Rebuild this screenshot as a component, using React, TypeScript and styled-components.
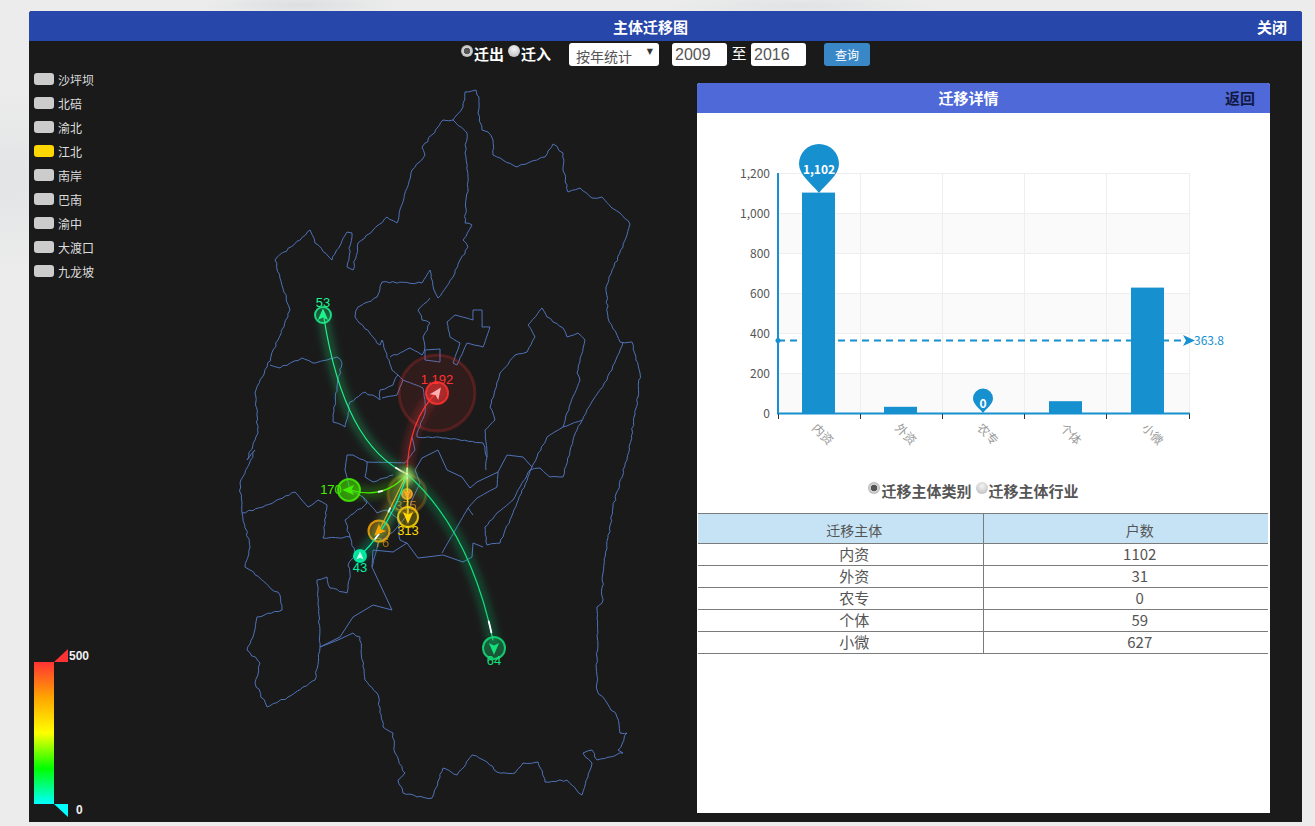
import React from "react";
import styled, { createGlobalStyle } from "styled-components";

const FONT = `"Noto Sans CJK SC", "Liberation Sans", sans-serif`;

const Global = createGlobalStyle`
  html, body { margin: 0; padding: 0; height: 826px; overflow: hidden; }
  body {
    font-family: ${FONT};
    background:
      radial-gradient(ellipse 100px 12px at 300px 5px, #dcdfe0 0, transparent 100%),
      radial-gradient(ellipse 140px 12px at 800px 6px, #e0e3e4 0, transparent 100%),
      radial-gradient(circle at 8px 180px, #e2e4e5 0, transparent 90px),
      #ececec;
  }
`;

const Page = styled.div`
  box-sizing: border-box;
  width: 1315px;
  height: 826px;
  padding: 11px 13px 4px 29px;
`;
const Window = styled.div`
  height: 811px;
  display: flex;
  flex-direction: column;
  background: #1a1a1a;
  border-radius: 3px 3px 0 0;
  overflow: hidden;
`;
const TitleBar = styled.header`
  flex: none;
  height: 30px;
  display: flex;
  align-items: center;
  background: #2747ab;
  color: #fff;
  font-size: 15px;
  font-weight: 700;
`;
const Title = styled.div`
  flex: 1;
  text-align: center;
`;
const CloseLink = styled.div`
  width: 30px;
  margin: 0 15px 0 -15px;
`;
const Toolbar = styled.div`
  flex: none;
  height: 29px;
  display: flex;
  justify-content: center;
  align-items: flex-start;
  padding-top: 2px;
  box-sizing: border-box;
  color: #fff;
  font-size: 15px;
`;
const RadioLabel = styled.label<{ $dark?: boolean }>`
  display: flex;
  align-items: center;
  height: 20px;
  font-weight: 700;
  font-size: 15px;
  color: ${(p) => (p.$dark ? "#555" : "#fff")};
  & + & {
    margin-left: 4px;
  }
`;
const Radio = styled.input.attrs({ type: "radio" })`
  appearance: none;
  width: 12px;
  height: 12px;
  margin: 0 1px 4px 0;
  border-radius: 50%;
  background: radial-gradient(circle at 50% 35%, #f4f4f4, #b5b5b5);
  &:checked {
    background: radial-gradient(circle, #555 0 3px, #d8d8d8 3.6px, #b5b5b5 6px);
  }
`;
const SelectWrap = styled.div`
  position: relative;
  margin-left: 18px;
`;
const Select = styled.select`
  appearance: none;
  display: block;
  box-sizing: border-box;
  width: 90px;
  height: 23px;
  padding: 3px 0 0 7px;
  border: 0;
  border-radius: 3px;
  background: #fff;
  color: #555;
  font-family: ${FONT};
  font-size: 14px;
`;
const Caret = styled.span`
  position: absolute;
  right: 6px;
  top: 4px;
  font-size: 8px;
  color: #333;
  font-family: "DejaVu Sans", sans-serif;
`;
const YearInput = styled.input<{ $ml?: number }>`
  box-sizing: border-box;
  width: 55px;
  height: 23px;
  padding: 0 3px;
  border: 0;
  border-radius: 3px;
  background: #fff;
  color: #555;
  font-family: "Liberation Sans", sans-serif;
  font-size: 16px;
  margin-left: ${(p) => p.$ml ?? 0}px;
`;
const To = styled.span`
  width: 24px;
  text-align: center;
  font-size: 15px;
  line-height: 20px;
`;
const QueryButton = styled.button`
  width: 46px;
  height: 23px;
  margin-left: 18px;
  padding: 0;
  border: 0;
  border-radius: 3px;
  background: #3a87c8;
  color: #fff;
  font-family: ${FONT};
  font-size: 12px;
`;
const Main = styled.div`
  flex: 1;
  display: flex;
  min-height: 0;
`;
const SideColumn = styled.aside`
  flex: none;
  width: 200px;
  box-sizing: border-box;
  padding: 0 0 3px 5px;
  display: flex;
  flex-direction: column;
  justify-content: space-between;
`;
const Legend = styled.ul`
  list-style: none;
  margin: 0;
  padding: 0;
  display: flex;
  flex-direction: column;
  gap: 6px;
`;
const LegendItem = styled.li`
  display: flex;
  align-items: center;
  height: 18px;
  gap: 4px;
  font-size: 12px;
  color: #ddd;
`;
const Swatch = styled.span<{ $on?: boolean }>`
  width: 20px;
  height: 12px;
  border-radius: 3px;
  background: ${(p) => (p.$on ? "#ffd700" : "#cccccc")};
`;
const MapSvg = styled.svg`
  flex: none;
  display: block;
`;
const Detail = styled.section`
  flex: none;
  width: 573px;
  height: 730px;
  margin-top: 13px;
  display: flex;
  flex-direction: column;
  background: #fff;
  border-radius: 3px 3px 0 0;
`;
const DetailHead = styled.div`
  flex: none;
  height: 30px;
  padding-bottom: 1px;
  box-sizing: border-box;
  display: flex;
  align-items: center;
  background: #5069d8;
  border-radius: 3px 3px 0 0;
  font-size: 15px;
  font-weight: 700;
`;
const DetailTitle = styled.div`
  flex: 1;
  text-align: center;
  color: #fff;
`;
const BackLink = styled.div`
  width: 30px;
  margin: 0 15px 0 -15px;
  color: #111a44;
`;
const ChartSvg = styled.svg`
  display: block;
  flex: none;
`;
const RadioRow = styled.div`
  flex: none;
  height: 33px;
  box-sizing: border-box;
  padding-right: 20px;
  display: flex;
  justify-content: center;
`;
const Table = styled.table`
  width: 570px;
  margin-left: 1px;
  border-collapse: collapse;
  table-layout: fixed;
  color: #555;
  text-align: center;
  font-size: 15px;
`;
const Th = styled.th<{ $last?: boolean }>`
  box-sizing: border-box;
  height: 30px;
  padding: 3px 0 0 28px;
  border: 1px solid #7b7b7b;
  border-left: 0;
  border-right-width: ${(p) => (p.$last ? 0 : 1)}px;
  background: #c5e3f5;
  font-size: 14px;
  font-weight: 400;
`;
const Td = styled.td<{ $last?: boolean }>`
  box-sizing: border-box;
  height: 22px;
  padding: 1px 0 0 28px;
  line-height: 18px;
  vertical-align: top;
  border: 1px solid #7b7b7b;
  border-left: 0;
  border-right-width: ${(p) => (p.$last ? 0 : 1)}px;
`;
const MapLabel = styled.text`
  font-family: "Liberation Sans", sans-serif;
  font-size: 13px;
  text-anchor: middle;
`;
const AxisLabel = styled.text`
  font-family: ${FONT};
  font-size: 12px;
  fill: #555;
  text-anchor: end;
`;
const CatLabel = styled.text`
  font-family: ${FONT};
  font-size: 12px;
  fill: #999;
`;
const PinText = styled.text`
  font-family: ${FONT};
  font-size: 12px;
  font-weight: 700;
  fill: #fff;
  text-anchor: middle;
`;
const MarkText = styled.text`
  font-family: ${FONT};
  font-size: 12px;
  fill: #1790cf;
`;
const ScaleText = styled.text`
  font-family: "Liberation Sans", sans-serif;
  font-size: 12px;
  font-weight: 700;
  fill: #eee;
`;

/* Turns an outline into a jagged border, the same on every run. */
function rough(pts: number[], amp: number): string {
  let seed = 7;
  const rnd = () => {
    seed = (seed * 16807) % 2147483647;
    return (seed % 1000) / 500 - 1;
  };
  let d = `M${pts[0]} ${pts[1]}`;
  for (let i = 2; i < pts.length; i += 2) {
    const x0 = pts[i - 2], y0 = pts[i - 1], x1 = pts[i], y1 = pts[i + 1];
    const len = Math.hypot(x1 - x0, y1 - y0);
    const n = amp > 0 ? Math.max(1, Math.floor(len / 3.5)) : 1;
    for (let k = 1; k < n; k++) {
      const t = k / n;
      d += `L${(x0 + (x1 - x0) * t + rnd() * amp).toFixed(1)} ${(y0 + (y1 - y0) * t + rnd() * amp).toFixed(1)}`;
    }
    d += `L${x1} ${y1}`;
  }
  return d;
}

const OUTLINE = [465,92,476,90,477,95,479,97,478,113,482,130,488,132,493,140,493,155,503,160,517,167,530,162,545,157,553,144,563,153,563,167,568,192,580,188,592,198,602,197,612,208,620,213,630,224,623,247,612,270,606,287,608,318,620,342,632,342,640,373,638,397,627,460,613,507,603,573,602,603,597,607,597,690,607,703,617,717,620,733,627,733,618,750,623,753,597,760,592,750,583,753,592,763,588,777,582,795,567,780,545,782,538,762,523,763,515,773,497,772,487,762,472,755,457,775,443,768,432,798,417,797,403,793,398,780,405,773,395,753,393,733,383,727,377,693,365,680,360,637,353,633];
const OUTLINE_LEFT = [320,647,315,680,288,697,267,707,255,683,260,663,247,650,253,637,257,617,282,610,280,595,250,570,245,567,250,547,242,513,240,483,255,450,247,460,258,433,255,393,267,367,278,340,290,310,275,260,310,230,315,243,332,260,347,232,352,233,347,267,353,270,358,243,373,230,387,217,397,223,412,170,425,155,422,147,443,120,453,120,463,107,465,92];

const BORDERS: { p: number[]; a: number }[] = [
  { p: OUTLINE, a: 1 },
  { p: OUTLINE_LEFT, a: 1 },
  { p: [353,633,338,640,320,647], a: 0 },
  { p: [453,120,467,133,465,153,468,177,465,223,472,225,463,240,468,247,460,260,453,277,438,298,434,290,430,270,422,283,382,282,377,297,358,307,355,317,380,345,382,340,392,370,398,375,393,385,380,390,380,400,365,392,350,402,345,427,333,422,337,387,342,363,337,357,313,363,302,358,280,368,270,365], a: 1 },
  { p: [430,298,418,310,422,320,430,323,423,337,425,347,422,355,410,348,390,357], a: 1 },
  { p: [425,350,440,349,440,362,425,360,425,350], a: 0 },
  { p: [447,322,455,315,473,320,473,310,482,310,482,327,490,327,483,347,467,343,457,365,453,363,460,343,450,337,447,322], a: 0.25 },
  { p: [398,375,403,380,423,388], a: 0.3 },
  { p: [403,380,397,395,382,398], a: 0.4 },
  { p: [423,388,425,400,425,413,417,433,417,437], a: 0.6 },
  { p: [417,437,443,438,483,443,487,457,486,470], a: 1 },
  { p: [485,430,495,420,490,407,500,373,515,355,527,352,535,337,528,325,542,308,547,317,563,328,567,337,578,333,585,340,577,373,580,380,567,413,563,427,547,437,537,457,532,467,517,503,500,543,487,545,485,527,497,513,513,500,530,470,540,468,550,477,563,477,573,440,577,430,593,400,607,380,623,342], a: 0.7 },
  { p: [563,427,582,420], a: 0.6 },
  { p: [485,430,487,457], a: 0.5 },
  { p: [507,455,523,457,532,467], a: 0 },
  { p: [507,455,498,472,477,482,470,488,462,477,447,470,438,450,422,458,415,470,420,483,412,500,407,515], a: 0 },
  { p: [498,472,497,487,477,498,468,508,457,527,442,553], a: 0.15 },
  { p: [468,508,473,515], a: 0.5 },
  { p: [483,547,473,543,472,557,463,562,443,555,427,557,418,558,407,543,393,552,373,550,372,567,392,610,373,605,353,617,340,637,320,647], a: 0 },
  { p: [407,543,400,540,397,518,387,510,377,513,363,497,367,503,345,520,350,537,323,538,327,505,318,500,308,507,295,492,263,507,242,513], a: 0.9 },
  { p: [320,647,317,580,327,577,330,588,347,593,350,573,348,565,355,553,350,537], a: 0.9 },
  { p: [347,455,353,455,367,462,365,477,373,482,393,475], a: 0.8 },
  { p: [367,462,405,463,415,450,412,437], a: 0.2 },
  { p: [347,455,345,470,350,490,363,497], a: 0.2 },
  { p: [372,567,378,543,395,530,407,515], a: 0.5 },
];

type Effect = {
  label: string; x: number; y: number; r: number; color: string; fill: number;
  angle: number; lx: number; ly: number; curve?: string; halo?: number;
  hot?: number; tip?: string; labelOpacity?: number;
};

const FROM = "M407 474";
const EFFECTS: Effect[] = [
  { label: "53", x: 323, y: 315, r: 8, color: "#1cf58e", fill: 0.25, angle: 0, lx: 323, ly: 307, curve: `${FROM}Q344 445 324 318`, hot: 1 },
  { label: "1,192", x: 437, y: 393, r: 11, color: "#ff3333", fill: 0.55, angle: 35, lx: 437, ly: 384, curve: `${FROM}Q408 420 438 391`, halo: 38, hot: 0, tip: "#ffb0b0" },
  { label: "170", x: 349, y: 490, r: 11, color: "#44ee00", fill: 0.55, angle: -90, lx: 331, ly: 494, curve: `${FROM}Q385 500 350 490`, hot: 48 },
  { label: "313", x: 408, y: 517, r: 10, color: "#ffd900", fill: 0.25, angle: 180, lx: 408, ly: 535, curve: `${FROM}L408 517`, hot: 4 },
  { label: "76", x: 379, y: 531, r: 10.5, color: "#ffa500", fill: 0.3, angle: 225, lx: 382, ly: 547, curve: `${FROM}L379 531`, hot: 60, labelOpacity: 0.6 },
  { label: "43", x: 360, y: 556, r: 6, color: "#00f5a8", fill: 0.9, angle: 0, lx: 360, ly: 572, curve: `${FROM}Q392 525 360 556`, hot: 70, tip: "#c8ffe8" },
  { label: "64", x: 494, y: 648, r: 11, color: "#14e07a", fill: 0.3, angle: 180, lx: 494, ly: 665, curve: `${FROM}Q470 530 493 640`, hot: 90 },
  { label: "375", x: 407, y: 494, r: 5, color: "#ffaa22", fill: 0.7, angle: 180, lx: 406, ly: 510, halo: 19, labelOpacity: 0.6 },
];

function Marker({ e }: { e: Effect }) {
  return (
    <g>
      {e.halo && (
        <circle cx={e.x} cy={e.y} r={e.halo} fill={e.color} fillOpacity={0.1} stroke={e.color} strokeOpacity={0.22} strokeWidth={3} />
      )}
      <circle cx={e.x} cy={e.y} r={e.r} fill={e.color} fillOpacity={e.fill} stroke={e.color} strokeOpacity={0.85} strokeWidth={2} />
      <MapLabel x={e.lx} y={e.ly} fill={e.color} opacity={e.labelOpacity ?? 1}>{e.label}</MapLabel>
    </g>
  );
}

function Trail({ e }: { e: Effect }) {
  if (!e.curve) return null;
  return (
    <g fill="none" strokeLinecap="round">
      <path d={e.curve} stroke={e.color} strokeOpacity={0.2} strokeWidth={13} filter="url(#soft)" />
      <path d={e.curve} stroke={e.color} strokeWidth={1.2} />
      <path d={e.curve} stroke="#fff" strokeWidth={1.8} pathLength={100} strokeDasharray={`0 ${e.hot ?? 0} 6 200`} />
    </g>
  );
}

function Arrow({ e }: { e: Effect }) {
  const s = e.r < 7 ? 0.6 : 0.85;
  return (
    <path
      transform={`translate(${e.x} ${e.y}) rotate(${e.angle}) scale(${s})`}
      d="M0 -8L6 6L0 3L-6 6Z"
      fill={e.tip ?? e.color}
    />
  );
}

function MapView() {
  return (
    <MapSvg width={468} height={752} viewBox="229 70 468 752">
      <defs>
        <filter id="soft" x="-50%" y="-50%" width="200%" height="200%">
          <feGaussianBlur stdDeviation="3" />
        </filter>
      </defs>
      <g fill="none" stroke="#4f72b8" strokeWidth={1} strokeLinejoin="round">
        {BORDERS.map((b, i) => (
          <path key={i} d={rough(b.p, b.a)} />
        ))}
      </g>
      {EFFECTS.map((e) => <Marker key={e.label} e={e} />)}
      {EFFECTS.map((e) => <Trail key={e.label} e={e} />)}
      <circle cx={407} cy={477} r={6} fill="#fff27a" opacity={0.55} filter="url(#soft)" />
      {EFFECTS.map((e) => <Arrow key={e.label} e={e} />)}
    </MapSvg>
  );
}

const TICKS = [0, 200, 400, 600, 800, 1000, 1200];
const Y0 = 413;
const yOf = (v: number) => Y0 - v * 0.2;
const BARS = [
  { name: "内资", v: 1102, x: 802, lx: 814 },
  { name: "外资", v: 31, x: 884, lx: 897 },
  { name: "农专", v: 0, x: 966, lx: 979 },
  { name: "个体", v: 59, x: 1049, lx: 1062 },
  { name: "小微", v: 627, x: 1131, lx: 1144 },
];
const SPLITS = [860, 942, 1024, 1106, 1189];

function Pin({ x, tip, r }: { x: number; tip: number; r: number }) {
  const cy = tip - r * 1.45;
  const d = `M${x} ${tip}C${x - r * 0.35} ${tip - r * 0.45} ${x - r} ${cy + r * 0.55} ${x - r} ${cy}A${r} ${r} 0 1 1 ${x + r} ${cy}C${x + r} ${cy + r * 0.55} ${x + r * 0.35} ${tip - r * 0.45} ${x} ${tip}Z`;
  return <path d={d} fill="#1790cf" />;
}

function Chart() {
  return (
    <ChartSvg width={573} height={367} viewBox="697 113 573 367">
      {[0, 400, 800].map((v) => (
        <rect key={v} x={778} y={yOf(v + 200)} width={411} height={40} fill="#fafafa" />
      ))}
      <g stroke="#eeeeee" strokeWidth={1}>
        {TICKS.slice(1).map((v) => (
          <line key={v} x1={778} x2={1189} y1={yOf(v) + 0.5} y2={yOf(v) + 0.5} />
        ))}
        {SPLITS.map((x) => (
          <line key={x} x1={x + 0.5} x2={x + 0.5} y1={173} y2={413} />
        ))}
      </g>
      {BARS.map((b) => (
        <rect key={b.name} x={b.x} y={yOf(b.v)} width={33} height={Y0 - yOf(b.v)} fill="#1790cf" />
      ))}
      <line x1={778} x2={1184} y1={340.5} y2={340.5} stroke="#1790cf" strokeWidth={1.8} strokeDasharray="7 5" />
      <circle cx={778} cy={340.5} r={2.5} fill="#1790cf" />
      <path d="M1183 335L1195 340.5L1183 346L1186 340.5Z" fill="#1790cf" />
      <MarkText x={1194} y={345}>363.8</MarkText>
      <line x1={778} x2={778} y1={173} y2={414} stroke="#1790cf" strokeWidth={2} />
      <line x1={777} x2={1190} y1={413.5} y2={413.5} stroke="#1790cf" strokeWidth={2} />
      <g stroke="#333" strokeWidth={1}>
        {[778, ...SPLITS].map((x) => (
          <line key={x} x1={x + 0.5} x2={x + 0.5} y1={414} y2={419} />
        ))}
      </g>
      {TICKS.map((v) => (
        <AxisLabel key={v} x={770} y={yOf(v) + 5}>{v.toLocaleString("en-US")}</AxisLabel>
      ))}
      {BARS.map((b) => (
        <CatLabel key={b.name} x={b.lx} y={430} transform={`rotate(45 ${b.lx} 426)`}>{b.name}</CatLabel>
      ))}
      <Pin x={819} tip={193} r={20} />
      <PinText x={819} y={174}>1,102</PinText>
      <Pin x={983} tip={413} r={10} />
      <PinText x={983} y={408}>0</PinText>
    </ChartSvg>
  );
}

function ColorScale() {
  return (
    <svg width={60} height={170} viewBox="34 649 60 170">
      <defs>
        <linearGradient id="scale" x1="0" y1="0" x2="0" y2="1">
          <stop offset="0" stopColor="#ff3333" />
          <stop offset="0.25" stopColor="#ffa500" />
          <stop offset="0.5" stopColor="#ffff00" />
          <stop offset="0.75" stopColor="#00ff00" />
          <stop offset="1" stopColor="#00ffff" />
        </linearGradient>
      </defs>
      <rect x={34} y={662} width={20} height={142} fill="url(#scale)" />
      <path d="M54 662L68 649V662Z" fill="#ff3333" />
      <path d="M54 804H68V817Z" fill="#00ffff" />
      <ScaleText x={69} y={660}>500</ScaleText>
      <ScaleText x={76} y={814}>0</ScaleText>
    </svg>
  );
}

const DISTRICTS = ["沙坪坝", "北碚", "渝北", "江北", "南岸", "巴南", "渝中", "大渡口", "九龙坡"];
const ROWS: [string, number][] = [["内资", 1102], ["外资", 31], ["农专", 0], ["个体", 59], ["小微", 627]];

export default function App() {
  return (
    <Page>
      <Global />
      <Window>
        <TitleBar>
          <Title>主体迁移图</Title>
          <CloseLink>关闭</CloseLink>
        </TitleBar>
        <Toolbar>
          <RadioLabel><Radio name="dir" defaultChecked />迁出</RadioLabel>
          <RadioLabel><Radio name="dir" />迁入</RadioLabel>
          <SelectWrap>
            <Select defaultValue="year"><option value="year">按年统计</option></Select>
            <Caret>▼</Caret>
          </SelectWrap>
          <YearInput $ml={13} defaultValue="2009" />
          <To>至</To>
          <YearInput defaultValue="2016" />
          <QueryButton>查询</QueryButton>
        </Toolbar>
        <Main>
          <SideColumn>
            <Legend>
              {DISTRICTS.map((d) => (
                <LegendItem key={d}><Swatch $on={d === "江北"} />{d}</LegendItem>
              ))}
            </Legend>
            <ColorScale />
          </SideColumn>
          <MapView />
          <Detail>
            <DetailHead>
              <DetailTitle>迁移详情</DetailTitle>
              <BackLink>返回</BackLink>
            </DetailHead>
            <Chart />
            <RadioRow>
              <RadioLabel $dark><Radio name="kind" defaultChecked />迁移主体类别</RadioLabel>
              <RadioLabel $dark><Radio name="kind" />迁移主体行业</RadioLabel>
            </RadioRow>
            <Table>
              <thead>
                <tr><Th>迁移主体</Th><Th $last>户数</Th></tr>
              </thead>
              <tbody>
                {ROWS.map(([n, v]) => (
                  <tr key={n}><Td>{n}</Td><Td $last>{v}</Td></tr>
                ))}
              </tbody>
            </Table>
          </Detail>
        </Main>
      </Window>
    </Page>
  );
}
